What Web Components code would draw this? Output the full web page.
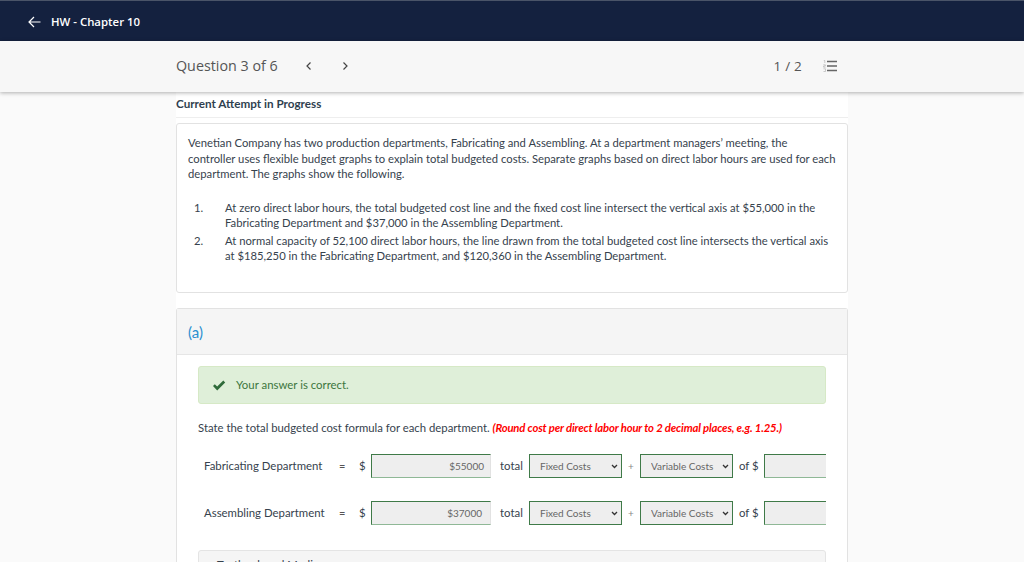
<!DOCTYPE html>
<html lang="en">
<head>
<meta charset="utf-8">
<title>HW - Chapter 10</title>
<style>
  html, body { margin: 0; height: 562px; overflow: hidden; background: #fafafa; }
  body { font-family: Lato, "Liberation Sans", sans-serif; color: #36424d; }
</style>
</head>
<body>
<top-bar>HW - Chapter 10</top-bar>
<question-bar>Question 3 of 6</question-bar>
<page-column>
  <attempt-title>Current Attempt in Progress</attempt-title>
  <problem-card>
    <p>Venetian Company has two production departments, Fabricating and Assembling. At a department managers’ meeting, the<br>controller uses flexible budget graphs to explain total budgeted costs. Separate graphs based on direct labor hours are used for each department. The graphs show the following.</p>
    <num-item n="1.">At zero direct labor hours, the total budgeted cost line and the fixed cost line intersect the vertical axis at $55,000 in the Fabricating Department and $37,000 in the Assembling Department.</num-item>
    <num-item n="2.">At normal capacity of 52,100 direct labor hours, the line drawn from the total budgeted cost line intersects the vertical axis at $185,250 in the Fabricating Department, and $120,360 in the Assembling Department.</num-item>
  </problem-card>
  <part-section label="(a)">
    <answer-alert>Your answer is correct.</answer-alert>
    <part-prompt>State the total budgeted cost formula for each department. <em slot="hint">(Round cost per direct labor hour to 2 decimal places, e.g. 1.25.)</em></part-prompt>
    <formula-row dept="Fabricating Department" amount="$55000"></formula-row>
    <formula-row dept="Assembling Department" amount="$37000" style="--amount-pad: 8px"></formula-row>
    <media-panel>Textbook and Media</media-panel>
  </part-section>
</page-column>

<script>
// Barra superior azul con flecha de regreso
class TopBar extends HTMLElement {
  constructor() {
    super();
    this.attachShadow({ mode: "open" });
    this.shadowRoot.innerHTML = `
    <style>
      :host { display: flex; align-items: center; box-sizing: border-box; height: 41px; padding: 1px 0 0 28px; background: #14213f; border-top: 1px solid #4a5468; color: #fff; font: 600 11.400px "Open Sans", sans-serif; }
      svg { width: 13px; height: 12px; margin-right: 10px; }
    </style>
    <svg viewBox="0 0 13 12" fill="none" stroke="#fff" stroke-width="1.2"><path d="M12.5 6H1M6 1 1 6l5 5"/></svg>
    <slot></slot>`;
  }
}

// Barra de pregunta con navegacion y contador
class QuestionBar extends HTMLElement {
  constructor() {
    super();
    this.attachShadow({ mode: "open" });
    this.shadowRoot.innerHTML = `
    <style>
      :host { display: flex; align-items: center; position: relative; z-index: 1; box-sizing: border-box; height: 51px; padding: 0 187px 2px 176px; background: #f7f7f7; box-shadow: 0 1px 4px rgba(0,0,0,.3); color: #555; font: 400 14.300px "Open Sans", sans-serif; }
      .nav { width: 9px; height: 10px; margin-left: 26px; }
      .nav + .nav { margin-left: 28px; }
      .score { margin-left: auto; font-size: 13.500px; letter-spacing: .2px; }
      .list { width: 14px; height: 12px; margin-left: 21px; }
    </style>
    <slot></slot>
    <svg class="nav" viewBox="0 0 9 10" fill="none" stroke="#444" stroke-width="1.2"><path d="M6.500 1.500 3 5l3.500 3.500"/></svg>
    <svg class="nav" viewBox="0 0 9 10" fill="none" stroke="#444" stroke-width="1.2"><path d="M2.500 1.500 6 5 2.500 8.500"/></svg>
    <span class="score">1 / 2</span>
    <svg class="list" viewBox="0 0 14 12"><path d="M4 1.500h10M4 6h10M4 10.500h10" stroke="#666" stroke-width="1.300"/><path d="M.8.5h1v2.500M.3 4.800h2v1.200H.6v1.200h2M.5 8.800h2v2.700H.5" fill="none" stroke="#aaa" stroke-width=".6"/></svg>`;
  }
}

// Columna blanca central
class PageColumn extends HTMLElement {
  constructor() {
    super();
    this.attachShadow({ mode: "open" });
    this.shadowRoot.innerHTML = `
    <style>
      :host { display: block; box-sizing: border-box; width: 672px; height: 470px; margin-left: 176px; background: #fff; overflow: hidden; }
    </style>
    <slot></slot>`;
  }
}

class AttemptTitle extends HTMLElement {
  constructor() {
    super();
    this.attachShadow({ mode: "open" });
    this.shadowRoot.innerHTML = `
    <style>
      :host { display: block; box-sizing: border-box; height: 26px; padding-top: 3px; border-bottom: 1px solid #eee; color: #2f3f4f; font: 700 11.700px/16px Lato, sans-serif; }
    </style>
    <slot></slot>`;
  }
}

// Enunciado del problema
class ProblemCard extends HTMLElement {
  constructor() {
    super();
    this.attachShadow({ mode: "open" });
    this.shadowRoot.innerHTML = `
    <style>
      :host { display: block; box-sizing: border-box; height: 170px; margin-top: 5px; padding: 11px 7px 11px 11px; border: 1px solid #e2e2e2; border-radius: 3px; font: 400 11.250px/15.500px Lato, sans-serif; color: #36424d; }
      ::slotted(p) { margin: 0 0 18px; }
    </style>
    <slot></slot>`;
  }
}

// Item numerado de la lista del enunciado
class NumItem extends HTMLElement {
  constructor() {
    super();
    this.attachShadow({ mode: "open" });
    this.shadowRoot.innerHTML = `
    <style>
      :host { display: flex; margin-bottom: 2px; }
      .n { flex: none; box-sizing: border-box; width: 37px; padding-left: 6px; }
    </style>
    <span class="n"></span>
    <div><slot></slot></div>`;
  }
  connectedCallback() {
    this.shadowRoot.querySelector(".n").textContent = this.getAttribute("n");
  }
}

// Seccion de una parte del problema
class PartSection extends HTMLElement {
  constructor() {
    super();
    this.attachShadow({ mode: "open" });
    this.shadowRoot.innerHTML = `
    <style>
      :host { display: block; box-sizing: border-box; margin-top: 15px; border: 1px solid #e2e2e2; border-radius: 3px 3px 0 0; border-bottom: 0; height: 260px; }
      header { box-sizing: border-box; height: 46px; padding: 14px 11px 0; background: #f5f5f5; border-bottom: 1px solid #e6e6e6; color: #2a8fd0; font: 400 15px/18px Lato, sans-serif; }
      .body { padding: 11px 21px 0; }
    </style>
    <header></header>
    <div class="body"><slot></slot></div>`;
  }
  connectedCallback() {
    this.shadowRoot.querySelector("header").textContent = this.getAttribute("label");
  }
}

class AnswerAlert extends HTMLElement {
  constructor() {
    super();
    this.attachShadow({ mode: "open" });
    this.shadowRoot.innerHTML = `
    <style>
      :host { display: flex; align-items: center; box-sizing: border-box; height: 38px; padding: 0 0 2px 13px; background: #dfefd9; border: 1px solid #d6e9c6; border-radius: 3px; color: #3c763d; font: 400 11.400px Lato, sans-serif; }
      svg { width: 14px; height: 11px; margin: 2px 10px 0 0; }
    </style>
    <svg viewBox="0 0 14 11"><path d="M1 6l1.800-1.800L5.200 6.600 11.300.6 13.200 2.400 5.200 10.400z" fill="#2f6b3a"/></svg>
    <slot></slot>`;
  }
}

class PartPrompt extends HTMLElement {
  constructor() {
    super();
    this.attachShadow({ mode: "open" });
    this.shadowRoot.innerHTML = `
    <style>
      :host { display: block; margin-top: 16px; height: 34px; font: 400 11.320px/15px Lato, sans-serif; color: #36424d; white-space: nowrap; }
      ::slotted(em) { color: #f00; font-weight: 700; font-style: italic; letter-spacing: -.17px; }
    </style>
    <slot></slot><slot name="hint"></slot>`;
  }
}

// Fila de formula: departamento, monto y selects
class FormulaRow extends HTMLElement {
  constructor() {
    super();
    this.attachShadow({ mode: "open" });
    this.shadowRoot.innerHTML = `
    <style>
      :host { display: flex; align-items: center; height: 24px; margin-bottom: 23px; font: 400 11.400px Lato, sans-serif; color: #36424d; white-space: nowrap; }
      .dept { width: 141px; margin-top: -1px; padding-left: 6px; box-sizing: border-box; }
      .eq { width: 20px; margin-top: -1px; color: #555; font-size: 11px; }
      .cur { width: 12px; margin-top: -2px; }
      .field { box-sizing: border-box; height: 24px; background: #eee; border: 1px solid #e2e2e2; border-left: 1px solid #3f7a48; border-top: 1px solid #3f7a48; border-bottom: 1px solid #8fb896; color: #666; font-size: 10px; line-height: 22px; text-align: right; }
      .amount { width: 120px; padding-right: var(--amount-pad, 6px); }
      .blank { flex: none; width: 62px; border-right: 0; }
      .total { margin: -2px 6px 0 9px; width: 23px; }
      .plus { width: 18px; text-align: center; color: #888; font-size: 10px; }
      .of { margin: -2px 6px 0; width: 19px; }
      select { appearance: none; flex: none; box-sizing: border-box; width: 93px; height: 24px; padding: 0 14px 0 10px; border: 1px solid #3f7a48; border-radius: 0; color: #666; font: 400 10px Lato, sans-serif; opacity: 1;
        background: #eee url("data:image/svg+xml,%3Csvg xmlns='http://www.w3.org/2000/svg' width='7' height='5'%3E%3Cpath d='M1 1l2.500 2.500L6 1' fill='none' stroke='%23333' stroke-width='1.300'/%3E%3C/svg%3E") no-repeat right 3px center; }
    </style>
    <span class="dept"></span>
    <span class="eq">=</span>
    <span class="cur">$</span>
    <span class="field amount"></span>
    <span class="total">total</span>
    <select><option>Fixed Costs</option></select>
    <span class="plus">+</span>
    <select><option>Variable Costs</option></select>
    <span class="of">of $</span>
    <span class="field blank"></span>`;
  }
  connectedCallback() {
    this.shadowRoot.querySelector(".dept").textContent = this.getAttribute("dept");
    this.shadowRoot.querySelector(".amount").textContent = this.getAttribute("amount");
  }
}

class MediaPanel extends HTMLElement {
  constructor() {
    super();
    this.attachShadow({ mode: "open" });
    this.shadowRoot.innerHTML = `
    <style>
      :host { display: block; box-sizing: border-box; height: 40px; margin-top: 25px; padding: 6px 18px; background: #f5f5f5; border: 1px solid #e4e4e4; border-radius: 3px; font: 400 11.400px/15px Lato, sans-serif; }
    </style>
    <slot></slot>`;
  }
}

customElements.define("top-bar", TopBar);
customElements.define("question-bar", QuestionBar);
customElements.define("page-column", PageColumn);
customElements.define("attempt-title", AttemptTitle);
customElements.define("problem-card", ProblemCard);
customElements.define("num-item", NumItem);
customElements.define("part-section", PartSection);
customElements.define("answer-alert", AnswerAlert);
customElements.define("part-prompt", PartPrompt);
customElements.define("formula-row", FormulaRow);
customElements.define("media-panel", MediaPanel);
</script>
</body>
</html>
